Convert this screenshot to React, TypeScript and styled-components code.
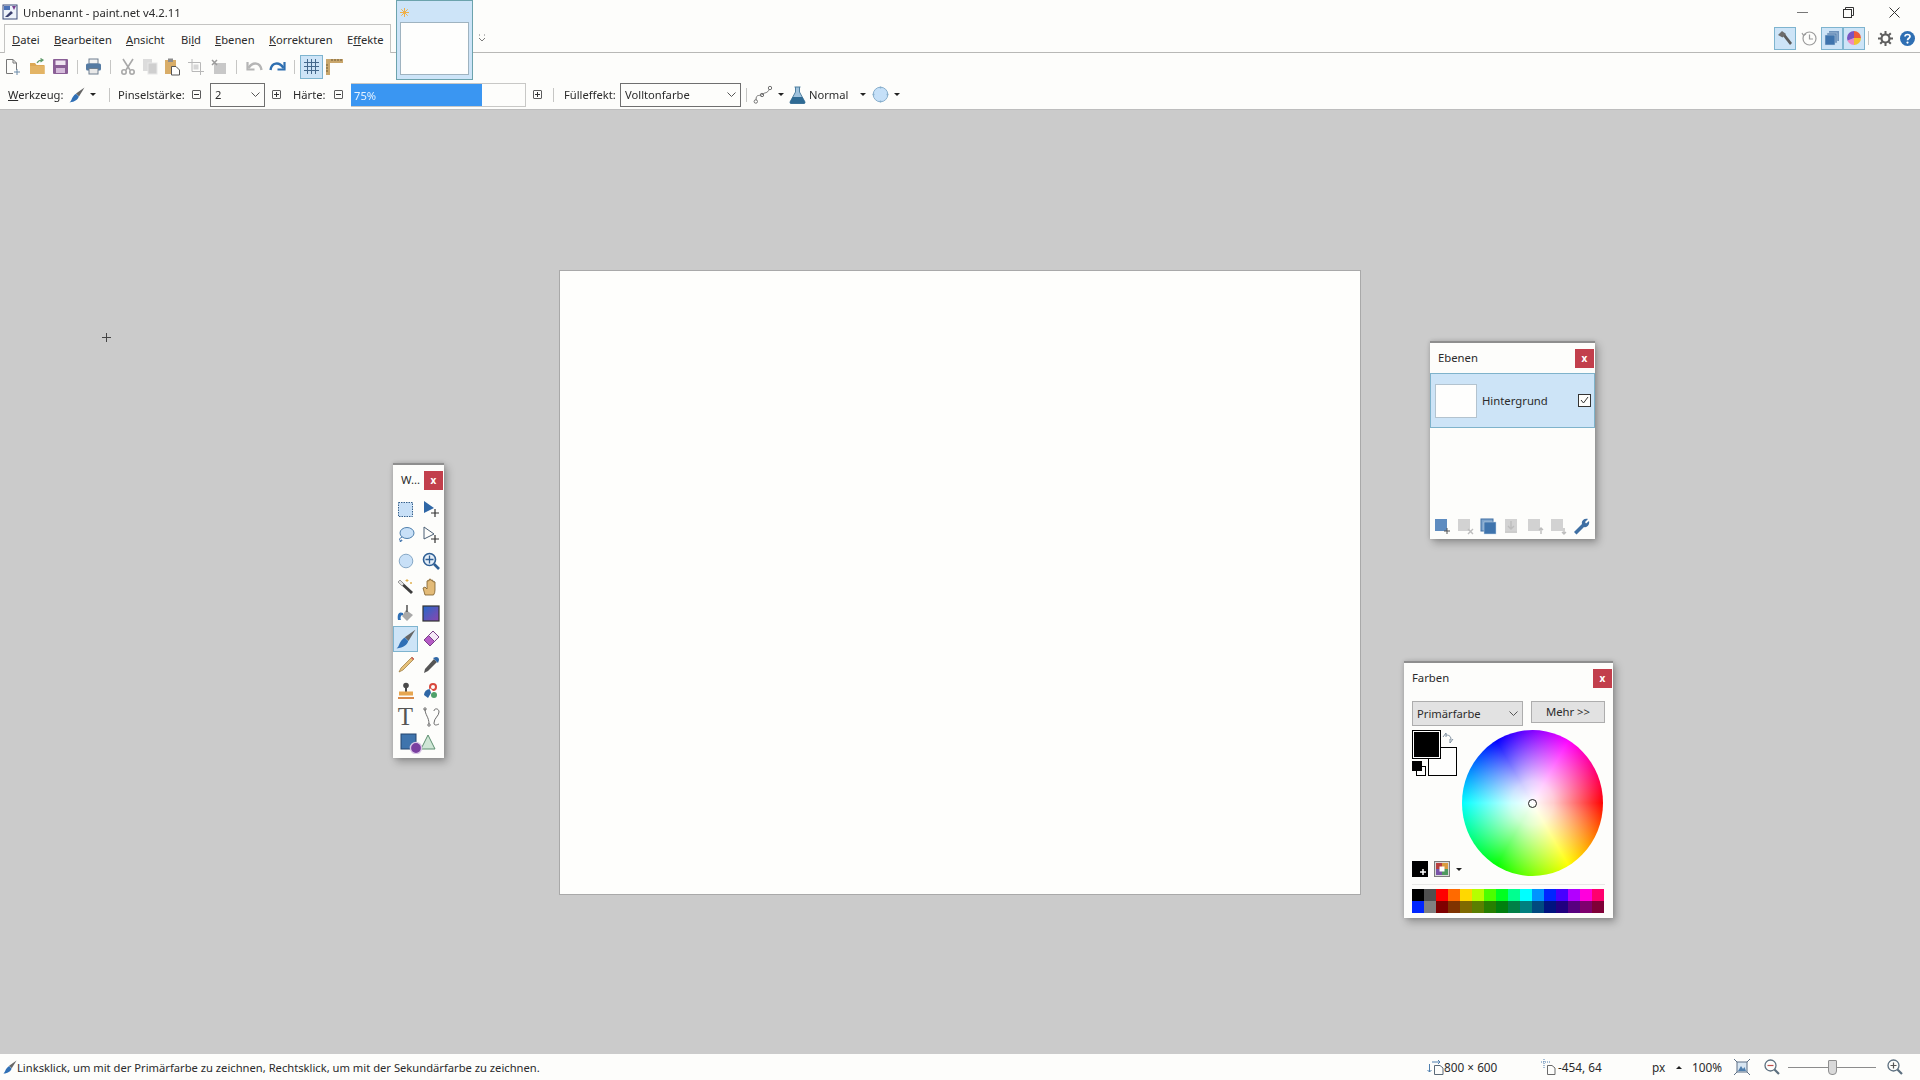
import React from 'react';
import styled, { createGlobalStyle } from 'styled-components';

const GlobalStyle = createGlobalStyle`
    html, body {
        margin: 0;
        padding: 0;
        background: #fdfdfb;
    }
    body {
        font-family: "Noto Sans", "Liberation Sans", sans-serif;
        font-size: 11.2px;
        color: #2b2b2b;
        overflow: hidden;
    }
    svg {
        display: block;
        flex: none;
    }
`;

const Shell = styled.div`
    width: 1920px;
    height: 1080px;
    display: flex;
    flex-direction: column;
    position: relative;
    filter: blur(0.35px);
`;

/* ---------- title + tabs ---------- */

const TitleBar = styled.div`
    height: 24px;
    display: flex;
    align-items: center;
    padding-left: 2px;
    gap: 5px;
    font-size: 11.3px;
`;

const WindowButtons = styled.div`
    margin-left: auto;
    display: flex;
    align-items: center;
    padding-right: 20px;
    gap: 35px;
`;

const TabRow = styled.div`
    height: 29px;
    display: flex;
    align-items: flex-end;
    border-bottom: 1px solid #b8b8b6;
    box-sizing: border-box;
`;

const MenuTab = styled.div`
    margin-left: 4px;
    width: 387px;
    height: 29px;
    margin-bottom: -1px;
    box-sizing: border-box;
    background: #fdfdfb;
    border: 1px solid #c4c4c2;
    border-bottom: 0;
    display: flex;
    align-items: center;
    padding-left: 7px;
`;

const MenuItem = styled.span<{ $w: number }>`
    width: ${(p) => p.$w}px;
    flex: none;
    white-space: nowrap;
    u {
        text-underline-offset: 1px;
    }
`;

const Chevron = styled.div`
    margin-left: 87px;
    align-self: center;
    width: 14px;
`;

const RightTools = styled.div`
    margin-left: auto;
    align-self: center;
    display: flex;
    align-items: center;
    padding-right: 4px;
`;

const PanelToggle = styled.div<{ $on?: boolean }>`
    width: 22px;
    height: 23px;
    box-sizing: border-box;
    display: flex;
    align-items: center;
    justify-content: center;
    background: ${(p) => (p.$on ? '#cde4f7' : 'transparent')};
    border: 1px solid ${(p) => (p.$on ? '#7eb4cf' : 'transparent')};
`;

const ThumbTab = styled.div`
    position: absolute;
    left: 396px;
    top: 0;
    width: 77px;
    height: 80px;
    box-sizing: border-box;
    background: #cde4f8;
    border: 1px solid #6ca3ad;
    padding: 7px 3px 3px;
    z-index: 2;
`;

const ThumbImage = styled.div`
    margin-top: 5px;
    height: 53px;
    background: #fefefd;
    border: 1px solid #9fb3c0;
    box-sizing: border-box;
`;

/* ---------- toolbars ---------- */

const ToolRow = styled.div<{ $h: number }>`
    height: ${(p) => p.$h}px;
    display: flex;
    align-items: center;
    flex: none;
`;

const IconSlot = styled.div<{ $w: number }>`
    width: ${(p) => p.$w}px;
    height: 100%;
    flex: none;
    display: flex;
    align-items: center;
    justify-content: center;
`;

const Divider = styled.div<{ $w: number }>`
    width: ${(p) => p.$w}px;
    flex: none;
    height: 100%;
    position: relative;
    display: flex;
    justify-content: center;
    align-items: center;
    &::after {
        content: '';
        display: block;
        width: 1px;
        height: 14px;
        background: #c6c6c4;
    }
`;

const GridToggle = styled.div`
    margin: 0 2px 0 1px;
    width: 23px;
    height: 24px;
    box-sizing: border-box;
    background: #cde4f7;
    border: 1px solid #7eb4cf;
    display: flex;
    align-items: center;
    justify-content: center;
    flex: none;
`;

const Label = styled.span<{ $w: number }>`
    width: ${(p) => p.$w}px;
    flex: none;
    white-space: nowrap;
`;

const StepBox = styled.div<{ $plus?: boolean }>`
    width: 9px;
    height: 9px;
    box-sizing: border-box;
    flex: none;
    border: 1px solid #5c5c5c;
    border-radius: 1px;
    position: relative;
    &::before {
        content: '';
        position: absolute;
        left: 1px;
        right: 1px;
        top: 3px;
        height: 1px;
        background: #333;
    }
    &::after {
        content: '';
        display: ${(p) => (p.$plus ? 'block' : 'none')};
        position: absolute;
        top: 1px;
        bottom: 1px;
        left: 3px;
        width: 1px;
        background: #333;
    }
`;

const Combo = styled.div<{ $w: number; $grey?: boolean }>`
    width: ${(p) => p.$w}px;
    height: ${(p) => (p.$grey ? 25 : 24)}px;
    box-sizing: border-box;
    flex: none;
    display: flex;
    align-items: center;
    justify-content: space-between;
    padding: 0 4px;
    background: ${(p) => (p.$grey ? '#e2e2e2' : '#fdfdfb')};
    border: 1px solid ${(p) => (p.$grey ? '#adadad' : '#6f6f6f')};
`;

const HardnessBar = styled.div`
    width: 175px;
    height: 24px;
    flex: none;
    box-sizing: border-box;
    background: #fdfdfb;
    border: 1px solid #c8c8c6;
    border-left: 0;
    display: flex;
`;

const HardnessFill = styled.div`
    background: #3a96f2;
    color: #e6f2ff;
    line-height: 24px;
    padding-left: 3px;
    box-sizing: border-box;
`;

const Caret = styled.div`
    width: 0;
    height: 0;
    flex: none;
    border-left: 3px solid transparent;
    border-right: 3px solid transparent;
    border-top: 3px solid #222;
`;

const CaretUp = styled(Caret)`
    transform: rotate(180deg);
`;

/* ---------- workspace ---------- */

const Workspace = styled.main`
    flex: 1;
    background: #cbcbcb;
    border-top: 1px solid #bdbdbd;
    display: flex;
    align-items: center;
    justify-content: center;
    position: relative;
`;

const Canvas = styled.div`
    width: 800px;
    height: 623px;
    background: #fefefc;
    border: 1px solid #a9a9a9;
`;

const Crosshair = styled.div`
    position: absolute;
    left: 102px;
    top: 223px;
`;

const FloatWin = styled.section<{ $x: number; $y: number; $w: number; $h: number }>`
    position: absolute;
    left: ${(p) => p.$x}px;
    top: ${(p) => p.$y - 110}px;
    width: ${(p) => p.$w}px;
    height: ${(p) => p.$h}px;
    box-sizing: border-box;
    background: #fdfdfb;
    border-top: 2px solid #8e8e8e;
    box-shadow: 3px 4px 8px rgba(0, 0, 0, 0.28), 0 0 4px rgba(0, 0, 0, 0.15);
    display: flex;
    flex-direction: column;
`;

const WinHead = styled.header`
    height: 30px;
    flex: none;
    display: flex;
    align-items: center;
    justify-content: space-between;
    padding: 0 1px 2px 8px;
    box-sizing: border-box;
    font-size: 11.3px;
`;

const CloseBtn = styled.div`
    width: 19px;
    height: 19px;
    margin-top: 3px;
    background: #c23f4c;
    color: #fff;
    font-size: 10px;
    font-weight: 700;
    line-height: 18px;
    text-align: center;
`;

const ToolGrid = styled.div`
    display: grid;
    grid-template-columns: 25px 25px;
    grid-auto-rows: 26px;
    margin-top: 1px;
`;

const ToolCell = styled.div<{ $on?: boolean; $span?: boolean }>`
    display: flex;
    align-items: center;
    justify-content: center;
    box-sizing: border-box;
    grid-column: ${(p) => (p.$span ? 'span 2' : 'auto')};
    background: ${(p) => (p.$on ? '#cde4f7' : 'transparent')};
    border: 1px solid ${(p) => (p.$on ? '#7eb4cf' : 'transparent')};
`;

const SerifT = styled.span`
    font-family: "Liberation Serif", serif;
    font-size: 25px;
    line-height: 24px;
    color: #555;
`;

const LayerRow = styled.div`
    height: 55px;
    flex: none;
    box-sizing: border-box;
    background: #cde4f7;
    border: 1px solid #7fb3cb;
    display: flex;
    align-items: center;
    padding: 0 3px 0 4px;
    font-size: 11.3px;
`;

const LayerThumb = styled.div`
    width: 42px;
    height: 34px;
    box-sizing: border-box;
    background: #fefefd;
    border: 1px solid #b3c3cf;
    margin-right: 5px;
`;

const LayerCheck = styled.div`
    margin-left: auto;
    width: 13px;
    height: 13px;
    box-sizing: border-box;
    border: 1px solid #333;
    background: #fdfdfb;
`;

const LayerTools = styled.div`
    margin-top: auto;
    height: 21px;
    padding-left: 1px;
    display: flex;
    align-items: flex-start;
`;

const LayerToolSlot = styled.div`
    width: 23.2px;
    display: flex;
    justify-content: center;
`;

const ColorBody = styled.div`
    padding: 0 8px;
    display: flex;
    flex-direction: column;
    flex: 1;
`;

const ColorTop = styled.div`
    margin-top: 8px;
    display: flex;
    align-items: flex-start;
    justify-content: space-between;
`;

const MoreBtn = styled.div`
    width: 74px;
    height: 22px;
    box-sizing: border-box;
    background: #e2e2e2;
    border: 1px solid #adadad;
    text-align: center;
    line-height: 19px;
    font-size: 11.3px;
`;

const ColorMid = styled.div`
    display: flex;
    height: 130px;
    position: relative;
    margin-top: 4px;
`;

const Swatches = styled.div`
    width: 50px;
    height: 46px;
    position: relative;
    flex: none;
`;

const Swatch = styled.div<{ $x: number; $y: number; $s: number; $c: string; $ring?: boolean }>`
    position: absolute;
    left: ${(p) => p.$x}px;
    top: ${(p) => p.$y}px;
    width: ${(p) => p.$s}px;
    height: ${(p) => p.$s}px;
    box-sizing: border-box;
    background: ${(p) => p.$c};
    border: 1px solid #000;
    box-shadow: ${(p) => (p.$ring ? 'inset 0 0 0 1px #fff' : 'none')};
`;

const SwapArrows = styled.div`
    position: absolute;
    left: 30px;
    top: 2px;
`;

const Wheel = styled.div`
    width: 141px;
    height: 146px;
    border-radius: 50%;
    position: absolute;
    left: 50px;
    top: 0;
    background:
        radial-gradient(closest-side, #fff 0%, rgba(255, 255, 255, 0.8) 30%, rgba(255, 255, 255, 0) 100%),
        conic-gradient(from 90deg, #f00, #ff0, #0f0, #0ff, #00f, #f0f, #f00);
`;

const WheelHandle = styled.div`
    position: absolute;
    left: 66px;
    top: 69px;
    width: 9px;
    height: 9px;
    box-sizing: border-box;
    border-radius: 50%;
    border: 1px solid #222;
`;

const ColorFoot = styled.div`
    display: flex;
    align-items: center;
    gap: 6px;
    height: 18px;
    position: relative;
`;

const PaletteLine = styled.div`
    margin-top: 6px;
    height: 1px;
    background: #e8e8e6;
`;

const Palette = styled.div`
    margin-top: 4px;
    display: grid;
    grid-template-columns: repeat(16, 12px);
    grid-auto-rows: 12px;
`;

const PaletteCell = styled.div<{ $c: string }>`
    background: ${(p) => p.$c};
`;

/* ---------- status ---------- */

const StatusBar = styled.footer`
    height: 26px;
    flex: none;
    display: flex;
    align-items: center;
    padding-left: 3px;
    background: #fdfdfb;
`;

const StatusRight = styled.div`
    margin-left: auto;
    display: flex;
    align-items: center;
    font-size: 11.8px;
`;

const ZoomTrack = styled.div`
    width: 88px;
    height: 1px;
    background: #8c8c8c;
    position: relative;
`;

const ZoomThumb = styled.div`
    position: absolute;
    left: 40px;
    top: -7px;
    width: 9px;
    height: 15px;
    box-sizing: border-box;
    background: #d9d9d9;
    border: 1px solid #8f8f8f;
    border-radius: 1px 1px 4px 4px;
`;

/* ---------- icons ---------- */

const BrushIcon = ({ size = 16 }: { size?: number }) => (
    <svg width={size} height={size} viewBox="0 0 16 16">
        <path d="M15.5 0.5 L7 6.5 L10 9.5 Z" fill="#666" />
        <path d="M7 6.8 L9.8 9.6 C9.2 12.5 6 15 0.5 15.5 C2.6 13.8 2.6 11.5 3.8 10 C4.7 8.6 5.8 7.5 7 6.8 Z" fill="#2f6fb5" />
    </svg>
);

const NewIcon = () => (
    <svg width="17" height="18" viewBox="0 0 17 18" fill="none" stroke="#777">
        <path d="M2.5 1.5 H9 L12.5 5 V12 M9 1.5 V5 H12.5 M2.5 1.5 V15.5 H9" />
        <path d="M13 11 V17 M10 14 H16" stroke="#6a8aa8" />
    </svg>
);
const OpenIcon = () => (
    <svg width="17" height="17" viewBox="0 0 17 17">
        <path d="M1 5 H6 L7.5 7 H15.5 V16 H1 Z" fill="#dca855" />
        <path d="M1 8 H15.5 V16 H1 Z" fill="#e3b465" />
        <path d="M8 5 C9.5 2.5 11 2 13 2 M11.5 0.5 L14 2 L11.5 4" fill="none" stroke="#5f9a6a" strokeWidth="1.2" />
    </svg>
);
const SaveIcon = () => (
    <svg width="17" height="17" viewBox="0 0 17 17">
        <rect x="1" y="1" width="15" height="15" rx="1" fill="#8a5f96" />
        <rect x="3.5" y="2.5" width="10" height="4.5" fill="#f0e6f2" />
        <rect x="4" y="10" width="9" height="5" fill="#d5bcdb" />
    </svg>
);
const PrintIcon = () => (
    <svg width="17" height="17" viewBox="0 0 17 17">
        <rect x="4" y="1" width="9" height="5" fill="#f3f3f3" stroke="#6f7f8f" />
        <rect x="1" y="5.5" width="15" height="7" rx="1.5" fill="#557ba3" />
        <rect x="4" y="10.5" width="9" height="5.5" fill="#e9e9e9" stroke="#6f7f8f" />
    </svg>
);
const CutIcon = () => (
    <svg width="16" height="17" viewBox="0 0 16 17" fill="none" stroke="#a9a9a9" strokeWidth="1.6">
        <path d="M3 1 L10 12 M13 1 L6 12" />
        <circle cx="4" cy="14" r="2.2" />
        <circle cx="12" cy="14" r="2.2" />
    </svg>
);
const CopyIcon = () => (
    <svg width="16" height="17" viewBox="0 0 16 17">
        <rect x="1" y="1" width="9" height="12" fill="#dcdcdc" />
        <rect x="6" y="5" width="9" height="11" fill="#cfcfcf" stroke="#e8e8e8" />
    </svg>
);
const PasteIcon = () => (
    <svg width="17" height="18" viewBox="0 0 17 18">
        <rect x="1" y="2" width="11" height="14" fill="#d9ad68" />
        <rect x="4" y="0.5" width="5" height="3.5" fill="#8d8d8d" />
        <path d="M7.5 8.5 H12 L15.5 12 V17 H7.5 Z" fill="#fff" stroke="#555" />
    </svg>
);
const CropIcon = () => (
    <svg width="16" height="16" viewBox="0 0 16 16" fill="none" stroke="#b8b8b8">
        <path d="M4 0 V12.5 H16 M0 3.5 H12.5 V16" />
        <rect x="5.5" y="5.5" width="5" height="5" fill="#d6d6d6" stroke="none" />
    </svg>
);
const DeselectIcon = () => (
    <svg width="16" height="16" viewBox="0 0 16 16">
        <rect x="3" y="4" width="12" height="11" fill="#c8c8c8" />
        <path d="M1 1 L6 6 M6 1 L1 6" stroke="#9a9a9a" strokeWidth="1.5" />
    </svg>
);
const RedoIcon = ({ c, flip }: { c: string; flip?: boolean }) => (
    <svg width="18" height="15" viewBox="0 0 18 15" fill="none" stroke={c} strokeWidth="2.4" style={flip ? { transform: 'scaleX(-1)' } : undefined}>
        <path d="M1.5 11 C2.5 3.5 10 2 14.5 9" />
        <path d="M15.5 3 V10.5 H8.5" strokeWidth="2.2" />
    </svg>
);
const GridIcon = () => (
    <svg width="15" height="15" viewBox="0 0 15 15" stroke="#44688c">
        <path d="M3.5 0 V15 M7.5 0 V15 M11.5 0 V15 M0 3.5 H15 M0 7.5 H15 M0 11.5 H15" />
    </svg>
);
const RulerIcon = () => (
    <svg width="17" height="17" viewBox="0 0 17 17">
        <path d="M0 1 H17 V5 H4 V17 H0 Z" fill="#c9a66b" />
        <path d="M6 1 V3 M9 1 V3 M12 1 V3 M15 1 V3 M0 7 H2 M0 10 H2 M0 13 H2" stroke="#6e5a36" />
    </svg>
);
const CurveIcon = () => (
    <svg width="20" height="20" viewBox="0 0 20 20" fill="none" stroke="#707070">
        <path d="M3 15 C3 8 7 12 10 9 C12 7 14 9 16.5 4" />
        <circle cx="2.8" cy="16.5" r="1.7" />
        <circle cx="9" cy="10" r="1.7" />
        <circle cx="17" cy="3" r="1.7" />
    </svg>
);
const FlaskIcon = () => (
    <svg width="17" height="18" viewBox="0 0 17 18">
        <path d="M5.5 1 H11.5 M6.5 1 V6 L1 16 Q0.8 17.5 2 17.5 H15 Q16.2 17.5 16 16 L10.5 6 V1" fill="#9fc2dd" stroke="#4f7f9f" />
        <path d="M3.7 11 H13.3 L16 16 Q16.2 17.5 15 17.5 H2 Q0.8 17.5 1 16 Z" fill="#2f6b94" />
    </svg>
);
const BlobIcon = () => (
    <svg width="17" height="17" viewBox="0 0 17 17">
        <circle cx="8.5" cy="8.5" r="7.3" fill="#c5e0f8" stroke="#88aecb" />
        <circle cx="8.5" cy="1.5" r="1" fill="#88aecb" />
        <circle cx="8.5" cy="15.5" r="1" fill="#88aecb" />
        <circle cx="1.5" cy="8.5" r="1" fill="#88aecb" />
        <circle cx="15.5" cy="8.5" r="1" fill="#88aecb" />
    </svg>
);
const HammerIcon = () => (
    <svg width="16" height="16" viewBox="0 0 16 16">
        <path d="M6 6 L8 4 L15 13 L13 15 Z" fill="#5d5d5d" />
        <path d="M1 5 L5 1 L9 4 L5.5 7.5 Z" fill="#6c6c6c" />
    </svg>
);
const HistoryIcon = () => (
    <svg width="16" height="16" viewBox="0 0 16 16" fill="none" stroke="#9c9c9c" strokeWidth="1.2">
        <circle cx="8.5" cy="8.5" r="6.5" />
        <path d="M8.5 4.5 V9 H12 M1 3 L2.5 5.5 L5 4" />
    </svg>
);
const LayersIcon = () => (
    <svg width="16" height="16" viewBox="0 0 16 16">
        <rect x="5" y="1" width="10" height="10" fill="#6f94bd" />
        <rect x="3" y="3" width="10" height="10" fill="#5c86b4" stroke="#c5d8e8" strokeWidth="0.5" />
        <rect x="1" y="5" width="10" height="10" fill="#3f74ad" stroke="#c5d8e8" strokeWidth="0.5" />
    </svg>
);
const ColorsIcon = () => (
    <svg width="16" height="16" viewBox="0 0 16 16">
        <defs>
            <clipPath id="clipPie"><circle cx="8" cy="8" r="7" /></clipPath>
        </defs>
        <g clipPath="url(#clipPie)">
            <path d="M8 8 L8 0 H16 V8 Z" fill="#ef5a3c" />
            <path d="M8 8 H16 V16 H8 Z" fill="#f2c230" />
            <path d="M8 8 V16 H0 V11 Z" fill="#f08ac0" />
            <path d="M8 8 L0 11 V0 H8 Z" fill="#7a54c2" />
        </g>
    </svg>
);
const GearIcon = () => (
    <svg width="15" height="15" viewBox="0 0 15 15" fill="none" stroke="#5e5e5e">
        <circle cx="7.5" cy="7.5" r="4" strokeWidth="2.2" />
        <path d="M7.5 0 V3 M7.5 12 V15 M0 7.5 H3 M12 7.5 H15 M2.2 2.2 L4.3 4.3 M10.7 10.7 L12.8 12.8 M12.8 2.2 L10.7 4.3 M4.3 10.7 L2.2 12.8" strokeWidth="2" />
    </svg>
);
const HelpIcon = () => (
    <svg width="15" height="15" viewBox="0 0 15 15">
        <circle cx="7.5" cy="7.5" r="7.5" fill="#2f6fb3" />
        <path d="M5 5.6 C5 2.8 10 2.8 10 5.6 C10 7.3 7.5 7.2 7.5 9.2" fill="none" stroke="#fff" strokeWidth="1.7" />
        <circle cx="7.5" cy="11.6" r="1.1" fill="#fff" />
    </svg>
);
const AppIcon = () => (
    <svg width="16" height="16" viewBox="0 0 16 16">
        <rect x="1" y="1" width="14" height="14" fill="#eef3fa" stroke="#3b4a78" />
        <path d="M3 13 L9 7 L11 9 L6 13 Z" fill="#3a3f6e" />
        <path d="M2 2 H8 V6 H2 Z" fill="#4b72b8" />
        <path d="M10 2 L14 2 L12 6 Z" fill="#7a3f90" />
    </svg>
);
const StarIcon = () => (
    <svg width="9" height="9" viewBox="0 0 9 9" stroke="#eeb04a">
        <path d="M4.5 0 V9 M0 4.5 H9 M1.3 1.3 L7.7 7.7 M7.7 1.3 L1.3 7.7" />
    </svg>
);
const SmallChevron = () => (
    <svg width="8" height="9" viewBox="0 0 8 9" fill="none" stroke="#7c7c7c">
        <path d="M1 4 L4 7 L7 4 M1 1 H2 M6 1 H7" />
    </svg>
);
const ComboArrow = () => (
    <svg width="9" height="6" viewBox="0 0 9 6" fill="none" stroke="#555">
        <path d="M0.5 0.5 L4.5 4.5 L8.5 0.5" />
    </svg>
);

/* tools window */
const Tools: React.ReactNode[] = [
    <svg width="17" height="17" viewBox="0 0 17 17" key="a"><rect x="1.5" y="1.5" width="14" height="14" fill="#c8e0f7" stroke="#35608c" strokeDasharray="1.5 1" /></svg>,
    <svg width="18" height="18" viewBox="0 0 18 18" key="b"><path d="M2 1 L12 8 L2 13 Z" fill="#2f67a6" /><path d="M13 9 V17 M9 13 H17" stroke="#333" strokeWidth="1.2" /></svg>,
    <svg width="18" height="18" viewBox="0 0 18 18" key="c"><ellipse cx="10" cy="7" rx="7" ry="5.5" fill="#c8e0f7" stroke="#4f80ad" /><path d="M5 11 C2 12 2 15 4 15 C6 15 5 12 3 16" fill="none" stroke="#2f67a6" /></svg>,
    <svg width="18" height="18" viewBox="0 0 18 18" key="d"><path d="M2 1 L12 8 L2 13 Z" fill="#fdfdfb" stroke="#4a5e74" /><path d="M13 9 V17 M9 13 H17" stroke="#333" strokeWidth="1.2" /></svg>,
    <svg width="16" height="16" viewBox="0 0 16 16" key="e"><circle cx="8" cy="8" r="6.8" fill="#c8e0f7" stroke="#86a8c6" /></svg>,
    <svg width="18" height="18" viewBox="0 0 18 18" key="f"><circle cx="7.5" cy="7.5" r="6" fill="#e4eef8" stroke="#2f5f94" strokeWidth="1.6" /><path d="M12 12 L17 17" stroke="#2f5f94" strokeWidth="2.6" /><path d="M7.5 3.5 V11.5 M3.5 7.5 H11.5" stroke="#2f5f94" strokeWidth="1.3" /></svg>,
    <svg width="18" height="18" viewBox="0 0 18 18" key="g"><path d="M1 4 L3 2 L16 14 L14 16 Z" fill="#3d3d3d" /><path d="M1 4 L3 2 L7 6 L5 8 Z" fill="#e2e2e2" stroke="#777" strokeWidth="0.5" /><path d="M10 1 V4 M8.5 2.5 H11.5" stroke="#e0b050" /><path d="M14 4 V6 M13 5 H15" stroke="#e0b050" /></svg>,
    <svg width="17" height="18" viewBox="0 0 17 18" key="h"><path d="M3 17 L1 10 L3 9 L5 11 V3 Q6 2 7 3 V1.5 Q8 0.5 9 1.5 V2.5 Q10 1.5 11 2.5 V4 Q12 3 13 4 V12 Q13 15 11.5 17 Z" fill="#e3bb78" stroke="#7a5c2a" strokeWidth="0.8" /></svg>,
    <svg width="19" height="18" viewBox="0 0 19 18" key="i"><path d="M10 6 L17 11 L11 17 L6 12 Z" fill="#a8a8a8" /><path d="M11 1 V8" stroke="#444" strokeWidth="1.4" /><path d="M7 9 C3 7 1 10 2 16 L5 16 C4 13 5 11 7 11 Z" fill="#2f6fb5" /></svg>,
    <svg width="18" height="17" viewBox="0 0 18 17" key="j"><defs><linearGradient id="gradTool" x1="0" y1="0" x2="1" y2="1"><stop offset="0" stopColor="#2469c9" /><stop offset="1" stopColor="#8b45b0" /></linearGradient></defs><rect x="1" y="1" width="16" height="15" fill="url(#gradTool)" stroke="#333" strokeWidth="1.2" /></svg>,
    <BrushIcon size={20} key="k" />,
    <svg width="18" height="18" viewBox="0 0 18 18" key="l"><path d="M11 1 L17 7 L8 16 L2 10 Z" fill="#b65cc6" stroke="#7a3f88" /><path d="M11 1 L17 7 L12.5 11.5 L6.5 5.5 Z" fill="#f5e8f7" stroke="#7a3f88" /></svg>,
    <svg width="18" height="18" viewBox="0 0 18 18" key="m"><path d="M15 1 L17 3 L6 14 L2 16 L4 12 Z" fill="#e6c078" stroke="#97753a" strokeWidth="0.7" /><path d="M15 1 L17 3 L16 4 L14 2 Z" fill="#d65a5a" /></svg>,
    <svg width="18" height="18" viewBox="0 0 18 18" key="n"><path d="M12 3 L15 6 L6 15 L2 17 L3 13 Z" fill="#555" /><path d="M11 2 L14 1 Q17 1 17 4 L16 7 Z" fill="#2f67a6" /></svg>,
    <svg width="18" height="18" viewBox="0 0 18 18" key="o"><circle cx="9" cy="3.5" r="2.8" fill="#4a4a4a" /><rect x="8" y="5" width="2" height="5" fill="#4a4a4a" /><rect x="2" y="9.5" width="14" height="4" fill="#e7a650" /><rect x="1" y="15" width="16" height="2" fill="#d7894a" /></svg>,
    <svg width="18" height="18" viewBox="0 0 18 18" key="p"><circle cx="11" cy="5" r="4" fill="#d8483c" /><circle cx="11" cy="5" r="2" fill="#fdfdfb" /><path d="M8 7 A6 6 0 0 0 2 13 L6 16 L9 11 Z" fill="#2f67a6" /><circle cx="12" cy="13" r="3" fill="#4fa06a" /><path d="M8 7 L11 10" stroke="#fff" strokeWidth="1.4" /></svg>,
    <SerifT key="q">T</SerifT>,
    <svg width="18" height="20" viewBox="0 0 18 20" fill="none" stroke="#6c6c6c" key="r"><path d="M3 2 C3 8 7 10 7 17" /><path d="M12 4 C12 1 17 1 17 5 C17 9 12 11 12 16 C12 19 15 18 17 17" /><circle cx="3" cy="2" r="1.2" /><circle cx="7" cy="18" r="1.2" /></svg>,
    <svg width="36" height="22" viewBox="0 0 36 22" key="s"><rect x="1" y="2" width="15" height="15" fill="#3f74ad" stroke="#24456e" /><path d="M28 3 L35 17 H21 Z" fill="#cfe6d6" stroke="#5c8f70" /><circle cx="16" cy="16" r="5.6" fill="#7a3fa0" stroke="#d9c6e6" strokeWidth="1.4" /></svg>,
];

/* layer buttons */
const LayerAdd = () => (
    <svg width="17" height="17" viewBox="0 0 17 17"><rect x="1" y="1" width="12" height="12" fill="#5e8cc0" /><path d="M13 10 V16 M10 13 H16" stroke="#555" /></svg>
);
const LayerOff = ({ mark }: { mark: string }) => (
    <svg width="17" height="17" viewBox="0 0 17 17"><rect x="1" y="1" width="12" height="12" fill="#d2d2d2" /><path d={mark} stroke="#bdbdbd" strokeWidth="1.4" fill="none" /></svg>
);
const LayerDup = () => (
    <svg width="17" height="17" viewBox="0 0 17 17"><rect x="1" y="1" width="12" height="12" fill="#7ea4cc" stroke="#3f6fa3" /><rect x="4" y="4" width="12" height="12" fill="#3f74ad" stroke="#c5d8e8" strokeWidth="0.5" /></svg>
);
const WrenchIcon = () => (
    <svg width="17" height="17" viewBox="0 0 17 17"><path d="M1 14 L9 6 C8 3 11 0 15 1 L12 4 L13 5.5 L16 3 C17 7 14 10 11 9 L3.5 16.5 Z" fill="#3f6fa3" /></svg>
);

/* status icons */
const SizeIcon = () => (
    <svg width="17" height="16" viewBox="0 0 17 16" fill="none" stroke="#5c6a78">
        <path d="M7.5 6.5 H13 L16 9 V15.5 H7.5 Z" />
        <path d="M5 3 H13 M11 1 L13 3 L11 5" stroke="#4f7fae" />
        <path d="M2.5 5 V13 M0.5 11 L2.5 13 L4.5 11" stroke="#4f7fae" />
    </svg>
);
const PosIcon = () => (
    <svg width="17" height="16" viewBox="0 0 17 16" fill="none" stroke="#6a6a6a">
        <path d="M6.5 6.5 H11 L14 9 V15.5 H6.5 Z" />
        <path d="M3 0 V9 M0 3 H9" strokeDasharray="1 1" stroke="#4f7fae" />
    </svg>
);
const FitIcon = () => (
    <svg width="16" height="16" viewBox="0 0 16 16" fill="none" stroke="#5c6f85">
        <rect x="3" y="3" width="10" height="10" fill="#d8e6f2" />
        <path d="M4 12 L7 7 L9 10 L10.5 8 L12 12 Z" fill="#4f7fae" stroke="none" />
        <path d="M0 0 L3 3 M16 0 L13 3 M0 16 L3 13 M16 16 L13 13" />
    </svg>
);
const ZoomIcon = ({ plus }: { plus?: boolean }) => (
    <svg width="16" height="16" viewBox="0 0 16 16" fill="none" stroke="#5c6f7f">
        <circle cx="6.5" cy="6.5" r="5.5" strokeWidth="1.3" />
        <path d="M10.5 10.5 L15 15" strokeWidth="2.2" />
        <path d={plus ? 'M3.5 6.5 H9.5 M6.5 3.5 V9.5' : 'M3.5 6.5 H9.5'} stroke={plus ? '#555' : '#c0504d'} strokeWidth="1.2" />
    </svg>
);

const topPalette = ['#000', '#505050', '#f00', '#ff6a00', '#ffd800', '#b6ff00', '#4cff00', '#00ff21', '#00ff90', '#0ff', '#0094ff', '#0026ff', '#4800ff', '#b200ff', '#ff00dc', '#ff006e'];
const bottomPalette = ['#0026ff', '#808080', '#7f0000', '#7f3300', '#7f6a00', '#5b7f00', '#267f00', '#007f0e', '#007f46', '#007f7f', '#004a7f', '#00137f', '#21007f', '#57007f', '#7f006e', '#7f0037'];

function App() {
    return (
        <>
            <GlobalStyle />
            <Shell>
                <TitleBar>
                    <AppIcon />
                    <span>Unbenannt - paint.net v4.2.11</span>
                    <WindowButtons>
                        <svg width="11" height="11" viewBox="0 0 11 11" stroke="#777"><path d="M0 5.5 H11" /></svg>
                        <svg width="11" height="11" viewBox="0 0 11 11" fill="none" stroke="#333"><rect x="0.5" y="2.5" width="8" height="8" /><path d="M2.5 2.5 V0.5 H10.5 V8.5 H8.5" /></svg>
                        <svg width="11" height="11" viewBox="0 0 11 11" stroke="#333"><path d="M0.5 0.5 L10.5 10.5 M10.5 0.5 L0.5 10.5" /></svg>
                    </WindowButtons>
                </TitleBar>
                <TabRow>
                    <MenuTab>
                        <MenuItem $w={42}><u>D</u>atei</MenuItem>
                        <MenuItem $w={72}><u>B</u>earbeiten</MenuItem>
                        <MenuItem $w={55}><u>A</u>nsicht</MenuItem>
                        <MenuItem $w={34}>Bi<u>l</u>d</MenuItem>
                        <MenuItem $w={54}><u>E</u>benen</MenuItem>
                        <MenuItem $w={78}><u>K</u>orrekturen</MenuItem>
                        <MenuItem $w={44}>E<u>f</u>fekte</MenuItem>
                    </MenuTab>
                    <Chevron><SmallChevron /></Chevron>
                    <RightTools>
                        <PanelToggle $on><HammerIcon /></PanelToggle>
                        <IconSlot $w={25}><HistoryIcon /></IconSlot>
                        <PanelToggle $on><LayersIcon /></PanelToggle>
                        <PanelToggle $on><ColorsIcon /></PanelToggle>
                        <Divider $w={7} />
                        <IconSlot $w={26}><GearIcon /></IconSlot>
                        <IconSlot $w={18}><HelpIcon /></IconSlot>
                    </RightTools>
                </TabRow>
                <ToolRow $h={27}>
                    <IconSlot $w={25}><NewIcon /></IconSlot>
                    <IconSlot $w={24}><OpenIcon /></IconSlot>
                    <IconSlot $w={23}><SaveIcon /></IconSlot>
                    <Divider $w={10} />
                    <IconSlot $w={22}><PrintIcon /></IconSlot>
                    <Divider $w={12} />
                    <IconSlot $w={23}><CutIcon /></IconSlot>
                    <IconSlot $w={22}><CopyIcon /></IconSlot>
                    <IconSlot $w={23}><PasteIcon /></IconSlot>
                    <IconSlot $w={23}><CropIcon /></IconSlot>
                    <IconSlot $w={23}><DeselectIcon /></IconSlot>
                    <Divider $w={12} />
                    <IconSlot $w={24}><RedoIcon c="#b5b5b5" flip /></IconSlot>
                    <IconSlot $w={23}><RedoIcon c="#2f6fb0" /></IconSlot>
                    <Divider $w={10} />
                    <GridToggle><GridIcon /></GridToggle>
                    <IconSlot $w={18}><RulerIcon /></IconSlot>
                </ToolRow>
                <ToolRow $h={29}>
                    <IconSlot $w={8} />
                    <Label $w={60}><u>W</u>erkzeug:</Label>
                    <IconSlot $w={18}><BrushIcon /></IconSlot>
                    <IconSlot $w={14}><Caret /></IconSlot>
                    <Divider $w={18} />
                    <Label $w={74}>Pinselstärke:</Label>
                    <StepBox />
                    <IconSlot $w={9} />
                    <Combo $w={55}>
                        <span>2</span>
                        <ComboArrow />
                    </Combo>
                    <IconSlot $w={7} />
                    <StepBox $plus />
                    <IconSlot $w={12} />
                    <Label $w={41}>Härte:</Label>
                    <StepBox />
                    <IconSlot $w={8} />
                    <HardnessBar>
                        <HardnessFill style={{ width: `${(75 / 100) * 175}px` }}>75%</HardnessFill>
                    </HardnessBar>
                    <IconSlot $w={7} />
                    <StepBox $plus />
                    <Divider $w={22} />
                    <Label $w={56}>Fülleffekt:</Label>
                    <Combo $w={121}>
                        <span>Volltonfarbe</span>
                        <ComboArrow />
                    </Combo>
                    <Divider $w={11} />
                    <IconSlot $w={21}><CurveIcon /></IconSlot>
                    <IconSlot $w={15}><Caret /></IconSlot>
                    <IconSlot $w={18}><FlaskIcon /></IconSlot>
                    <Label $w={54}>&nbsp;Normal</Label>
                    <IconSlot $w={6}><Caret /></IconSlot>
                    <IconSlot $w={5} />
                    <IconSlot $w={18}><BlobIcon /></IconSlot>
                    <IconSlot $w={16}><Caret /></IconSlot>
                </ToolRow>
                <Workspace>
                    <Canvas />
                    <Crosshair>
                        <svg width="9" height="9" viewBox="0 0 9 9" stroke="#444"><path d="M4.5 0 V9 M0 4.5 H9" /></svg>
                    </Crosshair>
                    <FloatWin $x={393} $y={463} $w={51} $h={295}>
                        <WinHead>
                            <span>W...</span>
                            <CloseBtn>x</CloseBtn>
                        </WinHead>
                        <ToolGrid>
                            {Tools.map((t, i) => (
                                <ToolCell key={i} $on={i === 10} $span={i === 18}>{t}</ToolCell>
                            ))}
                        </ToolGrid>
                    </FloatWin>
                    <FloatWin $x={1430} $y={341} $w={165} $h={198}>
                        <WinHead>
                            <span>Ebenen</span>
                            <CloseBtn>x</CloseBtn>
                        </WinHead>
                        <LayerRow>
                            <LayerThumb />
                            <span>Hintergrund</span>
                            <LayerCheck>
                                <svg width="11" height="11" viewBox="0 0 11 11" fill="none" stroke="#333"><path d="M2 5 L4.5 8 L9 2" /></svg>
                            </LayerCheck>
                        </LayerRow>
                        <LayerTools>
                            <LayerToolSlot><LayerAdd /></LayerToolSlot>
                            <LayerToolSlot><LayerOff mark="M11 11 L16 16 M16 11 L11 16" /></LayerToolSlot>
                            <LayerToolSlot><LayerDup /></LayerToolSlot>
                            <LayerToolSlot><LayerOff mark="M7 3 V11 M4 8 L7 11 L10 8 M1 14 H13" /></LayerToolSlot>
                            <LayerToolSlot><LayerOff mark="M14 16 V10 M12 12 L14 10 L16 12" /></LayerToolSlot>
                            <LayerToolSlot><LayerOff mark="M14 10 V16 M12 14 L14 16 L16 14" /></LayerToolSlot>
                            <LayerToolSlot><WrenchIcon /></LayerToolSlot>
                        </LayerTools>
                    </FloatWin>
                    <FloatWin $x={1404} $y={661} $w={209} $h={257}>
                        <WinHead>
                            <span>Farben</span>
                            <CloseBtn>x</CloseBtn>
                        </WinHead>
                        <ColorBody>
                            <ColorTop>
                                <Combo $w={111} $grey>
                                    <span>Primärfarbe</span>
                                    <ComboArrow />
                                </Combo>
                                <MoreBtn>Mehr &gt;&gt;</MoreBtn>
                            </ColorTop>
                            <ColorMid>
                                <Swatches>
                                    <Swatch $x={16} $y={17} $s={29} $c="#fefefd" />
                                    <Swatch $x={0} $y={0} $s={29} $c="#000" $ring />
                                    <Swatch $x={4} $y={36} $s={10} $c="#fefefd" />
                                    <Swatch $x={0} $y={31} $s={10} $c="#000" />
                                    <SwapArrows>
                                        <svg width="12" height="12" viewBox="0 0 12 12" fill="none" stroke="#7f8f9f">
                                            <path d="M1 5 L4 1 L4 5 M11 7 L8 11 L8 7 M4 3 C8 3 9 5 9 8" />
                                        </svg>
                                    </SwapArrows>
                                </Swatches>
                                <Wheel><WheelHandle /></Wheel>
                            </ColorMid>
                            <ColorFoot>
                                <svg width="16" height="16" viewBox="0 0 16 16"><rect width="16" height="16" fill="#000" /><path d="M11 8 V14 M8 11 H14" stroke="#fff" strokeWidth="1.5" /></svg>
                                <svg width="16" height="16" viewBox="0 0 16 16">
                                    <rect x="0.5" y="0.5" width="15" height="15" fill="#d9d9d9" stroke="#7c7c7c" />
                                    <rect x="2" y="2" width="6" height="6" fill="#b83f3f" />
                                    <rect x="8" y="2" width="6" height="6" fill="#d99a3f" />
                                    <rect x="2" y="8" width="6" height="6" fill="#7a54a8" />
                                    <rect x="8" y="8" width="6" height="6" fill="#4f9a5f" />
                                    <rect x="5.5" y="5.5" width="5" height="5" fill="#fff" />
                                </svg>
                                <Caret />
                            </ColorFoot>
                            <PaletteLine />
                            <Palette>
                                {[...topPalette, ...bottomPalette].map((c, i) => (
                                    <PaletteCell key={i} $c={c} />
                                ))}
                            </Palette>
                        </ColorBody>
                    </FloatWin>
                </Workspace>
                <StatusBar>
                    <BrushIcon size={14} />
                    <span>Linksklick, um mit der Primärfarbe zu zeichnen, Rechtsklick, um mit der Sekundärfarbe zu zeichnen.</span>
                    <StatusRight>
                        <SizeIcon />
                        <Label $w={97}>800 × 600</Label>
                        <PosIcon />
                        <Label $w={94}>-454, 64</Label>
                        <Label $w={22}>px</Label>
                        <IconSlot $w={10}><CaretUp /></IconSlot>
                        <IconSlot $w={8} />
                        <Label $w={42}>100%</Label>
                        <IconSlot $w={16}><FitIcon /></IconSlot>
                        <IconSlot $w={14} />
                        <ZoomIcon />
                        <IconSlot $w={8} />
                        <ZoomTrack><ZoomThumb /></ZoomTrack>
                        <IconSlot $w={11} />
                        <ZoomIcon plus />
                        <IconSlot $w={17} />
                    </StatusRight>
                </StatusBar>
                <ThumbTab>
                    <StarIcon />
                    <ThumbImage />
                </ThumbTab>
            </Shell>
        </>
    );
}

export default App;
